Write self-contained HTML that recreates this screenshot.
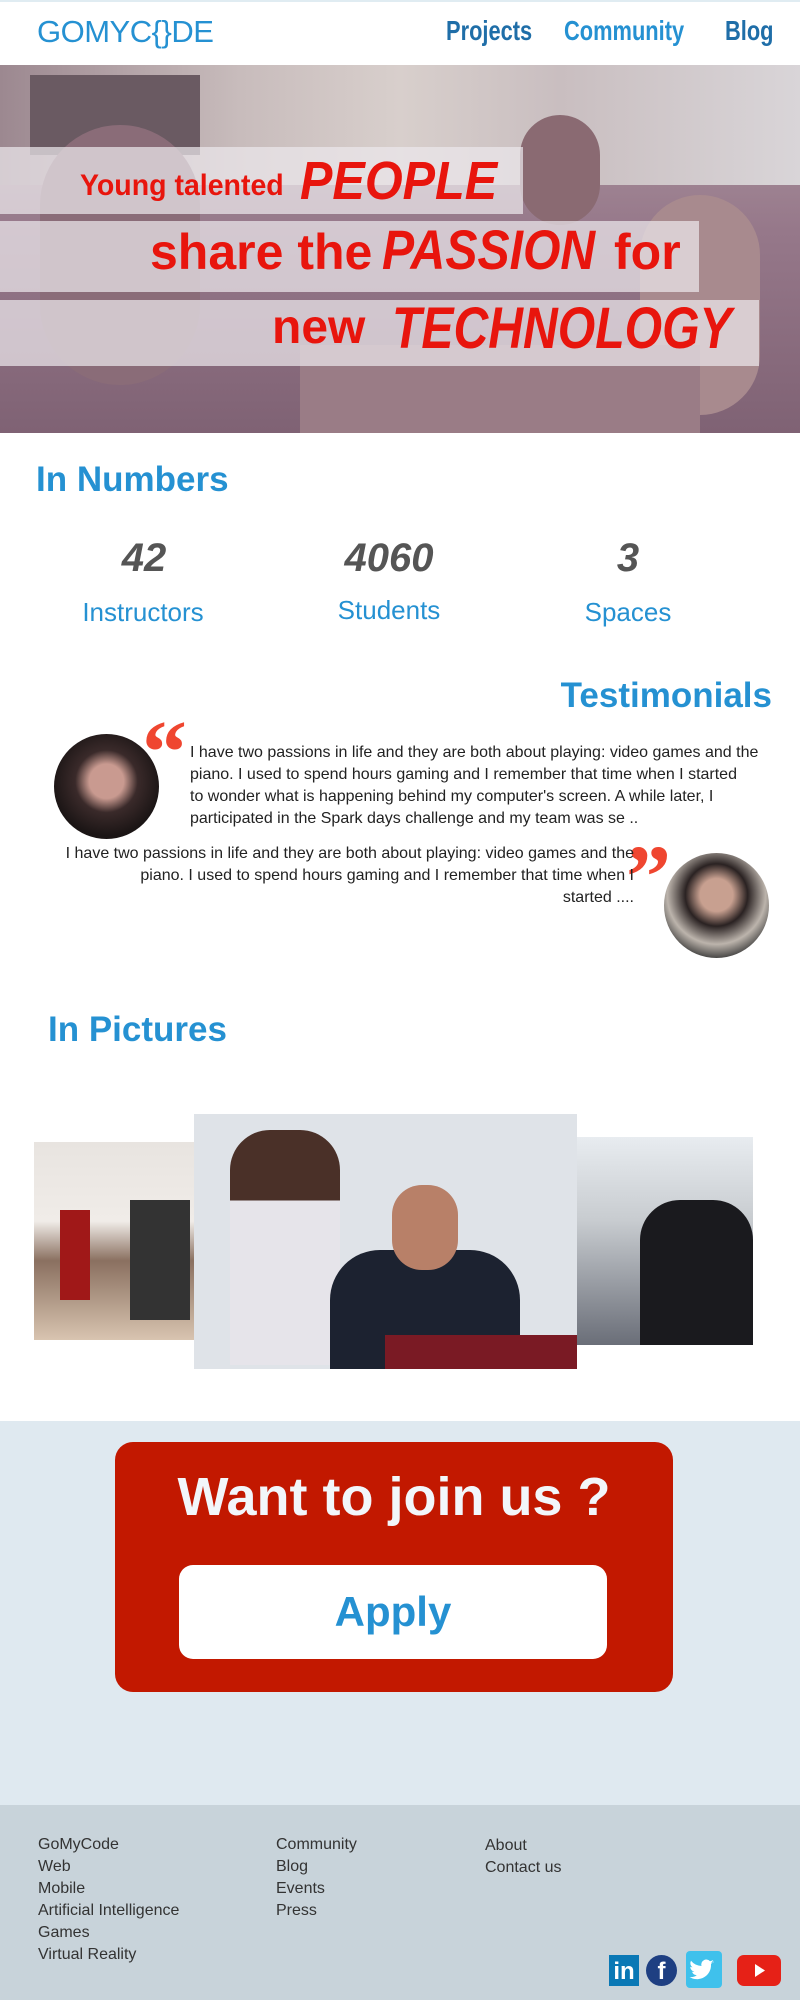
<!DOCTYPE html>
<html><head><meta charset="utf-8">
<style>
*{margin:0;padding:0;box-sizing:border-box}
body{width:800px;height:2000px;position:relative;background:#fff;font-family:"Liberation Sans",sans-serif;overflow:hidden}
.a{position:absolute;white-space:nowrap}
.sx{transform-origin:0 0}
.nav{font-weight:bold;font-size:28px;color:#1f6ea8;top:15px;transform:scaleX(0.78);transform-origin:0 0}
.strip{background:rgba(235,232,236,0.72)}
.red{color:#e8150d;font-weight:bold}
.brush{font-style:italic;font-weight:bold;color:#e8150d;transform-origin:0 0}
.num{font-style:italic;font-weight:bold;color:#555;font-size:40px;text-align:center;width:200px}
.lbl{color:#2591d2;font-size:26px;text-align:center;width:240px}
.h2{color:#2591d2;font-weight:bold;font-size:35px}
.tt{font-size:16px;line-height:22px;color:#222}
.ft{font-size:16px;line-height:22px;color:#333}
</style></head><body>
<div class="a" style="left:0;top:0;width:800px;height:2px;background:#e0ecf2"></div>
<div class="a" style="left:37px;top:14px;font-size:31px;color:#2591d2;letter-spacing:-0.5px">GOMYC{}DE</div>
<div class="a nav" style="left:446px">Projects</div>
<div class="a nav" style="left:564px;color:#2591d2">Community</div>
<div class="a nav" style="left:725px">Blog</div>

<div class="a" style="left:0;top:65px;width:800px;height:368px;overflow:hidden;background:linear-gradient(180deg,#b09aa2 0%,#96788a 45%,#7f6274 100%)">
 <div class="a" style="left:0;top:0;width:800px;height:120px;background:linear-gradient(90deg,#9c8890 0%,#c8bcbc 30%,#d8cfcc 50%,#c9bec0 70%,#d9d5d8 100%)"></div>
 <div class="a" style="left:30px;top:10px;width:170px;height:80px;background:#6a5a62"></div>
 <div class="a" style="left:40px;top:60px;width:160px;height:260px;border-radius:80px;background:#8a6c78"></div>
 <div class="a" style="left:640px;top:130px;width:120px;height:220px;border-radius:60px;background:#a88a8e"></div>
 <div class="a" style="left:520px;top:50px;width:80px;height:110px;border-radius:40px;background:#8a6a72"></div>
 <div class="a" style="left:300px;top:280px;width:400px;height:90px;background:#9a7c86"></div>
</div>
<div class="a strip" style="left:0;top:147px;width:523px;height:67px"></div>
<div class="a strip" style="left:0;top:221px;width:699px;height:71px"></div>
<div class="a strip" style="left:0;top:300px;width:759px;height:66px"></div>
<div class="a red sx" style="left:80px;top:169px;font-size:30px;transform:scaleX(0.95)">Young talented</div>
<div class="a brush" style="left:300px;top:150px;font-size:54px;transform:scaleX(0.9)">PEOPLE</div>
<div class="a red" style="left:150px;top:223px;font-size:50px">share the</div>
<div class="a brush" style="left:382px;top:217px;font-size:56px;transform:scaleX(0.86)">PASSION</div>
<div class="a red" style="left:614px;top:223px;font-size:50px">for</div>
<div class="a red" style="left:272px;top:300px;font-size:48px">new</div>
<div class="a brush" style="left:392px;top:295px;font-size:58px;transform:scaleX(0.83)">TECHNOLOGY</div>

<div class="a h2" style="left:36px;top:460px">In Numbers</div>
<div class="a num" style="left:44px;top:536px">42</div>
<div class="a num" style="left:289px;top:536px">4060</div>
<div class="a num" style="left:528px;top:536px">3</div>
<div class="a lbl" style="left:23px;top:597px">Instructors</div>
<div class="a lbl" style="left:269px;top:595px">Students</div>
<div class="a lbl" style="left:508px;top:597px">Spaces</div>

<div class="a h2" style="right:28px;top:676px">Testimonials</div>
<div class="a" style="left:54px;top:734px;width:105px;height:105px;border-radius:50%;background:radial-gradient(circle at 50% 45%,#c99a90 0 22%,#3a2a2a 40%,#1b1515 70%)"></div>
<div class="a" style="left:142px;top:708px;font-size:90px;color:#ef4630;font-weight:bold;font-family:'Liberation Serif',serif;line-height:1">“</div>
<div class="a tt" style="left:190px;top:742px">I have two passions in life and they are both about playing: video games and the<br>piano. I used to spend hours gaming and I remember that time when I started<br>to wonder what is happening behind my computer's screen. A while later, I<br>participated in the Spark days challenge and my team was se ..</div>
<div class="a" style="left:626px;top:833px;font-size:90px;color:#ef4630;font-weight:bold;font-family:'Liberation Serif',serif;line-height:1">”</div>
<div class="a tt" style="right:166px;top:843px;text-align:right">I have two passions in life and they are both about playing: video games and the<br>piano. I used to spend hours gaming and I remember that time when I<br>started ....</div>
<div class="a" style="left:664px;top:853px;width:105px;height:105px;border-radius:50%;background:radial-gradient(circle at 50% 40%,#c8a090 0 20%,#2a2222 38%,#bcb4ac 60%,#333 80%)"></div>

<div class="a h2" style="left:48px;top:1010px">In Pictures</div>
<div class="a" style="left:34px;top:1142px;width:160px;height:198px;background:linear-gradient(180deg,#e8e4e0 0%,#f0ece8 40%,#8a7060 60%,#d8c4b0 100%)"></div>
<div class="a" style="left:60px;top:1210px;width:30px;height:90px;background:#a01818"></div>
<div class="a" style="left:130px;top:1200px;width:60px;height:120px;background:#333"></div>
<div class="a" style="left:194px;top:1114px;width:383px;height:255px;background:#dfe3e8"></div>
<div class="a" style="left:230px;top:1130px;width:110px;height:235px;border-radius:40px 40px 0 0;background:linear-gradient(180deg,#4a3028 0 30%,#e6e4ea 30%)"></div>
<div class="a" style="left:330px;top:1250px;width:190px;height:119px;border-radius:50px 50px 0 0;background:#1c2230"></div>
<div class="a" style="left:392px;top:1185px;width:66px;height:85px;border-radius:30px;background:#b88068"></div>
<div class="a" style="left:385px;top:1335px;width:192px;height:34px;background:#7a1a24"></div>
<div class="a" style="left:577px;top:1137px;width:176px;height:208px;background:linear-gradient(180deg,#e8ecf0 0%,#c8ccd0 40%,#6a6e78 100%)"></div>
<div class="a" style="left:640px;top:1200px;width:113px;height:145px;border-radius:40px 40px 0 0;background:#1a1a1e"></div>

<div class="a" style="left:0;top:1421px;width:800px;height:384px;background:#dfe9f0"></div>
<div class="a" style="left:115px;top:1442px;width:558px;height:250px;border-radius:18px;background:#c21800"></div>
<div class="a" style="left:115px;top:1466px;width:558px;text-align:center;color:#f2f6fa;font-weight:bold;font-size:54px">Want to join us ?</div>
<div class="a" style="left:179px;top:1565px;width:428px;height:94px;border-radius:14px;background:#fff;text-align:center;line-height:94px;color:#2591d2;font-weight:bold;font-size:42px">Apply</div>

<div class="a" style="left:0;top:1805px;width:800px;height:195px;background:#c8d3da"></div>
<div class="a ft" style="left:38px;top:1834px">GoMyCode<br>Web<br>Mobile<br>Artificial Intelligence<br>Games<br>Virtual Reality</div>
<div class="a ft" style="left:276px;top:1834px">Community<br>Blog<br>Events<br>Press</div>
<div class="a ft" style="left:485px;top:1835px">About<br>Contact us</div>
<div class="a" style="left:609px;top:1955px;width:30px;height:31px;background:#0a78b5;color:#fff;font-weight:bold;font-size:24px;text-align:center;line-height:33px">in</div>
<div class="a" style="left:646px;top:1955px;width:31px;height:31px;border-radius:50%;background:#1e3f82;color:#fff;font-weight:bold;font-size:24px;text-align:center;line-height:33px">f</div>
<div class="a" style="left:686px;top:1951px;width:36px;height:37px;border-radius:4px;background:#3fc1ec">
<svg width="36" height="37" viewBox="0 0 36 37"><path d="M28 11c-1 .5-2 .7-3 .8 1-.6 1.8-1.6 2.2-2.8-1 .6-2 1-3.2 1.2A5 5 0 0 0 15.5 15 14 14 0 0 1 5 9.8a5 5 0 0 0 1.5 6.6c-.8 0-1.6-.3-2.2-.6 0 2.4 1.7 4.4 4 4.9-.7.2-1.5.2-2.2.1.6 2 2.5 3.4 4.7 3.4A10 10 0 0 1 3.5 26 14 14 0 0 0 25 13.5v-.6c1-.7 1.8-1.5 2.5-2.4z" fill="#fff"/></svg></div>
<div class="a" style="left:737px;top:1955px;width:44px;height:31px;border-radius:7px;background:#e62117">
<svg width="44" height="31"><path d="M18 9 L28 15.5 L18 22 Z" fill="#fff"/></svg></div>
</body></html>
